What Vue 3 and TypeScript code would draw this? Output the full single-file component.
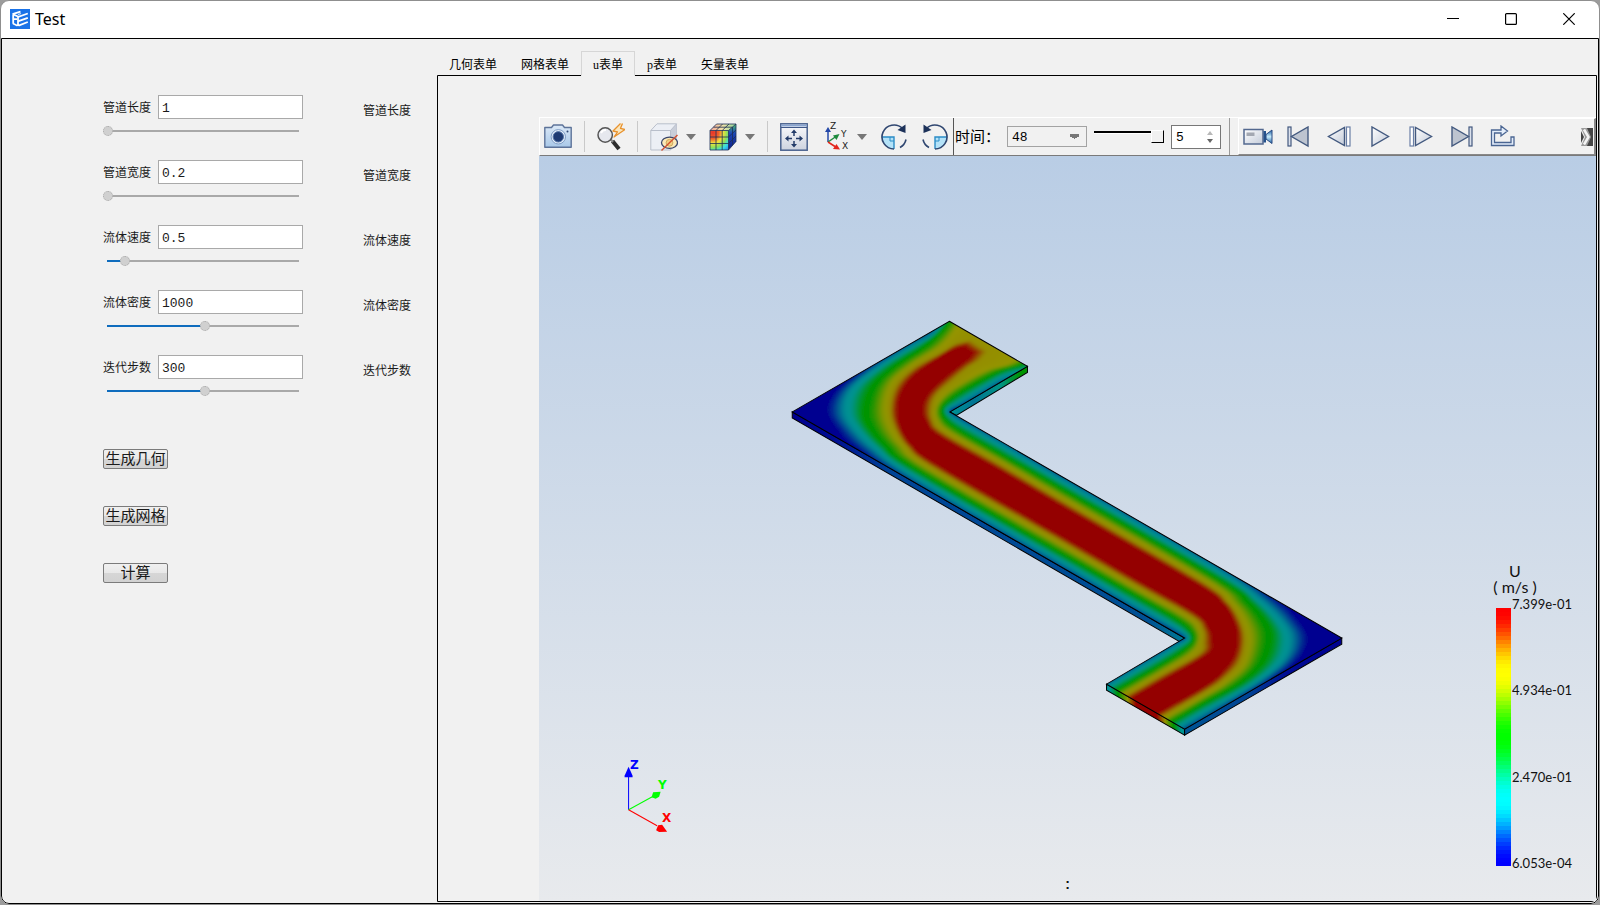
<script setup lang="ts">
import { ref, reactive } from 'vue'

interface Param {
  id: string
  name: string
  value: string
  level: number
}

const params = reactive<Param[]>([
  { id: 'length', name: '管道长度', value: '1', level: 0 },
  { id: 'width', name: '管道宽度', value: '0.2', level: 0 },
  { id: 'speed', name: '流体速度', value: '0.5', level: 9 },
  { id: 'density', name: '流体密度', value: '1000', level: 51 },
  { id: 'steps', name: '迭代步数', value: '300', level: 51 },
])

const actions = ['生成几何', '生成网格', '计算']
const tabs = ['几何表单', '网格表单', 'u表单', 'p表单', '矢量表单']
const activeTab = ref(2)
const timeStep = ref('48')
const stride = ref('5')
const legendLabels = ['7.399e-01', '4.934e-01', '2.470e-01', '6.053e-04']

type Pt = [number, number]
type Rgb = [number, number, number]
interface Level {
  color: Rgb
  outer: Pt[]
  inner: Pt[]
  outerGap: number
  innerGap: number
}

// Iso-lines of the velocity field around the upper bend, from wall to core.
const levels: Level[] = [
  {
    color: [0, 0, 144],
    outer: [[939, 312], [927, 324], [903, 340], [856, 372], [832, 391], [822, 410], [830, 427], [850, 448], [913, 490], [1067, 579]],
    inner: [[1050, 378], [1027, 380], [1003, 390], [984, 401], [966, 409], [956, 411], [962, 413], [977, 421], [1000, 433], [1067, 472]],
    outerGap: -8,
    innerGap: -7,
  },
  {
    color: [0, 146, 146],
    outer: [[947, 316], [933, 336], [913, 347], [880, 367], [853, 390], [847, 411], [855, 428], [877, 450], [913, 476], [1067, 565]],
    inner: [[1045, 362], [1025, 371], [1003, 377], [980, 390], [960, 402], [946, 411], [953, 419], [970, 429], [1000, 446], [1067, 485]],
    outerGap: 6,
    innerGap: 5,
  },
  {
    color: [0, 148, 0],
    outer: [[952, 316], [941, 330], [923, 347], [893, 367], [873, 386], [865, 408], [867, 424], [883, 445], [913, 469], [1067, 558]],
    inner: [[1045, 350], [1027, 363], [1003, 371], [977, 384], [955, 397], [943, 408], [945, 419], [960, 431], [1000, 454], [1067, 492]],
    outerGap: 14,
    innerGap: 13,
  },
  {
    color: [148, 148, 0],
    outer: [[962, 318], [953, 334], [940, 348], [913, 365], [893, 383], [886, 407], [890, 427], [903, 447], [930, 470], [1067, 549]],
    inner: [[1040, 335], [1013, 362], [985, 371], [960, 384], [943, 396], [935, 408], [936, 420], [947, 432], [1000, 462], [1067, 501]],
    outerGap: 22,
    innerGap: 21,
  },
  {
    color: [148, 142, 0],
    outer: [[972, 340], [957, 343], [943, 352], [913, 367], [894, 385], [888, 408], [892, 427], [905, 447], [932, 469], [1067, 547]],
    inner: [[990, 352], [982, 361], [970, 368], [955, 381], [939, 395], [934, 407], [934, 420], [945, 433], [1000, 464], [1067, 503]],
    outerGap: 24,
    innerGap: 23,
  },
  {
    color: [148, 0, 0],
    outer: [[962, 347], [951, 351], [938, 358], [914, 376], [902, 393], [898, 410], [901, 427], [913, 447], [940, 467], [1067, 540]],
    inner: [[971, 353], [966, 360], [958, 367], [939, 382], [926, 396], [921, 409], [925, 422], [938, 436], [1000, 471], [1067, 510]],
    outerGap: 31,
    innerGap: 30,
  },
]

const slope = 0.577
const turn = ([x, y]: Pt): Pt => [2134 - x, 1050 - y]

// The outlet leg is the inlet leg turned by half a revolution, with fully developed flow.
function outletOuter(l: Level): Pt[] {
  const run = [985, 955, 930].map((x): Pt => [x, 412 - (x - 792) * slope + l.outerGap])
  return [...run, ...l.outer.slice(3, 9)].map(turn)
}
function outletInner(l: Level): Pt[] {
  const run = [1050, 1027, 1000, 975].map((x): Pt => [x, 412 - (x - 950) * slope - l.innerGap])
  return [...run, ...l.inner.slice(4, 9)].map(turn)
}
function sides(l: Level): [Pt[], Pt[]] {
  return [
    [...l.outer, ...outletInner(l).reverse()],
    [...l.inner, ...outletOuter(l).reverse()].reverse(),
  ]
}
function spline(p: Pt[]): string {
  let d = ''
  for (let i = 0; i < p.length - 1; i++) {
    const a = p[Math.max(i - 1, 0)]
    const b = p[i]
    const c = p[i + 1]
    const e = p[Math.min(i + 2, p.length - 1)]
    const n = [b[0] + (c[0] - a[0]) / 6, b[1] + (c[1] - a[1]) / 6, c[0] - (e[0] - b[0]) / 6, c[1] - (e[1] - b[1]) / 6, c[0], c[1]]
    d += 'C' + n.map((v) => v.toFixed(1)).join(' ')
  }
  return d
}
const mix = (a: number[], b: number[], t: number) => a.map((v, i) => v + (b[i] - v) * t)

const bands: { d: string; fill: string }[] = []
const STEPS = 10
for (let k = 0; k < levels.length - 1; k++) {
  const [la, ra] = sides(levels[k])
  const [lb, rb] = sides(levels[k + 1])
  for (let s = 1; s <= STEPS; s++) {
    const t = s / STEPS
    const l = la.map((p, i) => mix(p, lb[i], t) as Pt)
    const r = ra.map((p, i) => mix(p, rb[i], t) as Pt)
    const e = t * t * (3 - 2 * t)
    bands.push({
      d: `M${l[0].join(' ')}${spline(l)}L${r[0].join(' ')}${spline(r)}Z`,
      fill: `rgb(${mix(levels[k].color, levels[k + 1].color, e).map(Math.round).join(',')})`,
    })
  }
}

const ramp: Rgb[] = [[255, 0, 0], [255, 255, 0], [0, 255, 0], [0, 255, 255], [0, 0, 255]]
const swatches = Array.from({ length: 64 }, (_, i) => {
  const pos = (i / 63) * 4
  const k = Math.min(Math.floor(pos), 3)
  const t = pos - k
  return `rgb(${mix(ramp[k], ramp[k + 1], t * t * (3 - 2 * t)).map(Math.round).join(',')})`
})
</script>

<template>
  <div class="window">
    <header class="titlebar">
      <svg class="logo" width="20" height="20" viewBox="0 0 20 20" aria-hidden="true">
        <rect width="20" height="20" fill="#1a73e8" />
        <path d="M2.500 5.200L10.500 2.600M3.200 5.500v9.200M3 10.200h4M3 14.500l4.500 2.200M8 8.300v8.700M4 5.800l4.500 2L17.800 4.500M8.500 12.200l9.300-3.400M8.500 16.600l9.300-3.600" fill="none" stroke="#fff" stroke-width="1.800" />
        <path d="M11 4.500L8 5.600" stroke="#bcd8fb" stroke-width="1.200" />
      </svg>
      <h1>Test</h1>
      <div class="winbtns">
        <button type="button" aria-label="最小化">
          <svg width="12" height="12" viewBox="0 0 12 12"><path d="M0 5.500h12" stroke="#000" /></svg>
        </button>
        <button type="button" aria-label="最大化">
          <svg width="12" height="12" viewBox="0 0 12 12"><rect x=".6" y=".6" width="10.800" height="10.800" rx="1" fill="none" stroke="#000" stroke-width="1.200" /></svg>
        </button>
        <button type="button" aria-label="关闭">
          <svg width="12" height="12" viewBox="0 0 12 12"><path d="M.3.3l11.400 11.400M11.700.3L.3 11.700" stroke="#000" stroke-width="1.200" /></svg>
        </button>
      </div>
    </header>

    <div class="body">
      <form class="side" @submit.prevent>
        <div v-for="p in params" :key="p.id" class="param">
          <label :for="p.id">{{ p.name }}</label>
          <input :id="p.id" v-model="p.value" type="text" class="field" />
          <span class="note">{{ p.name }}</span>
          <input v-model.number="p.level" type="range" class="slider" min="0" max="100" :aria-label="p.name" :style="{ '--fill': p.level + '%' }" />
        </div>
        <div class="actions">
          <button v-for="a in actions" :key="a" type="button">{{ a }}</button>
        </div>
      </form>

      <main class="main">
        <nav class="tabs" role="tablist">
          <button v-for="(t, i) in tabs" :key="t" type="button" role="tab" :aria-selected="i === activeTab" :class="{ active: i === activeTab }" @click="activeTab = i">{{ t }}</button>
        </nav>
        <section class="pane">
          <div class="viewer">
            <div class="toolbar">
              <button type="button" class="tool" aria-label="截图">
                <svg width="28" height="28" viewBox="0 0 28 28">
                  <defs><linearGradient id="gCam" x1="0" y1="0" x2="0" y2="1"><stop offset="0" stop-color="#dce9f7" /><stop offset="1" stop-color="#a9c8e8" /></linearGradient></defs>
                  <path d="M.8 4.500h6.700l2-2.500h9l2 2.500h6.700v19.700H.8z" fill="url(#gCam)" stroke="#5d7399" stroke-width="1.400" stroke-linejoin="round" />
                  <circle cx="14.300" cy="13.800" r="7.200" fill="#e4eefa" stroke="#7f9cc4" />
                  <circle cx="14.300" cy="13.800" r="5.200" fill="#1f3b73" stroke="#5676a8" />
                  <circle cx="23.500" cy="8.500" r="1" fill="#2d4674" />
                </svg>
              </button>
              <i class="sep"></i>
              <button type="button" class="tool" aria-label="快速缩放">
                <svg width="28" height="28" viewBox="0 0 28 28">
                  <path d="M15.500 18l6.500 8" stroke="#2d2d2d" stroke-width="4" /><path d="M13 15.500l3 3.500" stroke="#888" stroke-width="2" />
                  <circle cx="8.200" cy="12" r="7.200" fill="#e6e8ee" stroke="#555" stroke-width="1.500" />
                  <path d="M4 10a5 5 0 0 1 5-3" stroke="#fff" stroke-width="2" fill="none" />
                  <path d="M23.500.5L16 8l4.500 1L17 14l11-7.500-4.500-1.200 2-4.800" fill="#fbe6bc" stroke="#e8922e" stroke-width="1.300" stroke-linejoin="round" />
                </svg>
              </button>
              <i class="sep"></i>
              <button type="button" class="tool" aria-label="显示实体">
                <svg width="28" height="28" viewBox="0 0 28 28">
                  <path d="M.8 7.500L7 .8h19.500V19L20.500 27H.8z" fill="#eceff5" stroke="#b9bfcb" />
                  <path d="M20.500 7.500l6-6.700V19l-6 8z" fill="#c9ced9" />
                  <path d="M.8 7.500h19.700V27M20.500 7.500l6-6.700" fill="none" stroke="#b9bfcb" />
                  <ellipse cx="19.500" cy="19.800" rx="8" ry="5.600" fill="#fbe9b8" stroke="#3b466a" stroke-width="1.300" />
                  <circle cx="19.500" cy="19.800" r="3.400" fill="#f3d184" stroke="#c79a4e" stroke-width=".8" />
                  <path d="M11.500 27.500L27.500 12" stroke="#d2502f" stroke-width="1.400" />
                </svg>
              </button>
              <button type="button" class="drop" aria-label="实体选项"><svg width="10" height="6" viewBox="0 0 10 6"><path d="M0 0h10L5 6z" fill="#777" /></svg></button>
              <button type="button" class="tool spaced" aria-label="云图">
                <svg width="28" height="28" viewBox="0 0 28 28">
                  <defs>
                    <radialGradient id="gCube" cx=".15" cy=".1" r="1.300"><stop offset="0" stop-color="#e8352a" /><stop offset=".25" stop-color="#f2602a" /><stop offset=".42" stop-color="#f5e23c" /><stop offset=".6" stop-color="#8be05a" /><stop offset=".75" stop-color="#35e0e8" /><stop offset="1" stop-color="#2a6cf0" /></radialGradient>
                    <linearGradient id="gTop" x1="0" y1="0" x2="1" y2="0"><stop offset="0" stop-color="#f4a294" /><stop offset=".5" stop-color="#efe3a8" /><stop offset="1" stop-color="#8ed99a" /></linearGradient>
                    <linearGradient id="gSide" x1="0" y1="0" x2="0" y2="1"><stop offset="0" stop-color="#48c46a" /><stop offset=".35" stop-color="#1d48b8" /><stop offset="1" stop-color="#0c1d86" /></linearGradient>
                  </defs>
                  <path d="M1 7.500h18.500V27H1z" fill="url(#gCube)" /><path d="M1 7.500L7.500 1H27l-7.500 6.500z" fill="url(#gTop)" /><path d="M19.500 7.500L27 1v17.500L19.500 27z" fill="url(#gSide)" />
                  <path d="M7 7.500V27M13.200 7.500V27M1 14h18.500M1 20.500h18.500M7 7.500L13.500 1M13.200 7.500L20 1M4.500 4.200h19v18M1 7.500L7.500 1H27v17.500L19.500 27H1zH19.500V27M19.500 7.500L27 1M19.500 14L27 7M19.500 20.500L27 13" fill="none" stroke="#1d2f55" stroke-width=".8" />
                </svg>
              </button>
              <button type="button" class="drop" aria-label="云图选项"><svg width="10" height="6" viewBox="0 0 10 6"><path d="M0 0h10L5 6z" fill="#777" /></svg></button>
              <i class="sep"></i>
              <button type="button" class="tool" aria-label="适应窗口">
                <svg width="28" height="28" viewBox="0 0 28 28">
                  <defs><linearGradient id="gFit" x1="0" y1="0" x2="0" y2="1"><stop offset="0" stop-color="#fbfbfd" /><stop offset="1" stop-color="#cdd3df" /></linearGradient></defs>
                  <rect x=".8" y=".8" width="26.400" height="26.400" fill="url(#gFit)" stroke="#4a628e" stroke-width="1.500" />
                  <path d="M1 2.500h26" stroke="#8aa5d0" stroke-width="2" /><path d="M1 4.500h26" stroke="#3e5788" />
                  <path d="M14 8v5M14 18v5M7 15.500h5M16 15.500h5" stroke="#233b69" stroke-width="1.500" />
                  <path d="M14 6.500l-3 3.500h6zM14 24.500l-3-3.500h6zM5 15.500l3.500-3v6zM23 15.500l-3.500-3v6z" fill="#233b69" />
                </svg>
              </button>
              <button type="button" class="tool spaced" aria-label="视角">
                <svg width="28" height="30" viewBox="0 0 28 30">
                  <path d="M7 20V8" stroke="#2448a8" stroke-width="1.500" /><path d="M7 5l-3 5h6z" fill="#2448a8" />
                  <path d="M7 20l8-5.500" stroke="#1c8a3c" stroke-width="1.500" /><path d="M18.500 12l-6.500 1.500 3.500 4.500z" fill="#1c8a3c" />
                  <path d="M7 20l7 4.500" stroke="#e3261c" stroke-width="1.500" /><path d="M19 27.500l-7-.5 3.500-5z" fill="#e3261c" />
                  <g class="axis-name"><text x="9" y="7">Z</text><text x="20" y="15">Y</text><text x="21" y="27">X</text></g>
                </svg>
              </button>
              <button type="button" class="drop" aria-label="视角选项"><svg width="10" height="6" viewBox="0 0 10 6"><path d="M0 0h10L5 6z" fill="#777" /></svg></button>
              <button v-for="dir in ['顺时针', '逆时针']" :key="dir" type="button" class="tool spaced" :aria-label="dir + '旋转'">
                <svg width="28" height="28" viewBox="0 0 28 28">
                  <g :class="{ mirrored: dir === '逆时针' }">
                    <path d="M2 14h12v12A12 12 0 0 1 2 14z" fill="#b4e2f8" /><path d="M2 14h12v12" fill="none" stroke="#2a8cc6" stroke-width="1.400" /><path d="M10 14v4h4" fill="none" stroke="#2a8cc6" />
                    <path d="M14 26A12 12 0 1 1 22.500 5.500M26 16.500a12 12 0 0 1-6 8" fill="none" stroke="#2f4670" stroke-width="1.600" />
                    <path d="M25.500 1.500V10L17.500 7z" fill="#1c3159" />
                  </g>
                </svg>
              </button>

              <div class="time">
                <label for="step">时间：</label>
                <select id="step" v-model="timeStep"><option>48</option></select>
                <input type="range" class="stepper" min="0" max="48" value="48" aria-label="时间步" />
                <div class="spin">
                  <input v-model="stride" type="text" aria-label="步长" />
                  <span>
                    <button type="button" aria-label="增加"><svg width="6" height="4" viewBox="0 0 6 4"><path d="M0 4h6L3 0z" fill="#b8b8b8" /></svg></button>
                    <button type="button" aria-label="减少"><svg width="6" height="4" viewBox="0 0 6 4"><path d="M0 0h6L3 4z" fill="#666" /></svg></button>
                  </span>
                </div>
              </div>

              <div class="playbar">
                <svg width="0" height="0" class="defs" aria-hidden="true"><defs><linearGradient id="gPlay" x1="0" y1="0" x2="1" y2="1"><stop offset="0" stop-color="#fff" /><stop offset="1" stop-color="#c3cbd9" /></linearGradient><linearGradient id="gLens" x1="0" y1="0" x2="0" y2="1"><stop offset="0" stop-color="#1b5fa6" /><stop offset=".5" stop-color="#c8ecfb" /><stop offset="1" stop-color="#1b5fa6" /></linearGradient></defs></svg>
                <button type="button" class="record" aria-label="录制">
                  <svg width="30" height="20" viewBox="0 0 30 20"><rect x="1" y="2.500" width="19" height="14.500" fill="url(#gPlay)" stroke="#53688f" stroke-width="1.500" /><rect x="3.500" y="5.500" width="8" height="3.500" fill="#a3a8b2" /><rect x="20.500" y="4" width="2.500" height="11.500" fill="#24518c" /><path d="M23 7.500L29 3v13.500L23 12z" fill="url(#gLens)" stroke="#2a4a80" /></svg>
                </button>
                <button type="button" aria-label="第一帧">
                  <svg width="22" height="22" viewBox="0 0 22 22"><rect x="1" y="1" width="3" height="19" fill="#dbe1ec" stroke="#43597f" stroke-width="1.200" /><path d="M21 1v19L4.500 10.500z" fill="#bdc4d0" stroke="#43597f" stroke-width="1.400" /></svg>
                </button>
                <button type="button" aria-label="上一帧">
                  <svg width="24" height="22" viewBox="0 0 24 22"><rect x="19.500" y="1" width="3.500" height="19" fill="#fff" stroke="#6a7fa6" stroke-width="1.200" /><path d="M17.500 1.500v18l-16-9z" fill="url(#gPlay)" stroke="#43597f" stroke-width="1.400" /></svg>
                </button>
                <button type="button" aria-label="播放">
                  <svg width="20" height="22" viewBox="0 0 20 22"><path d="M2 1v19l16.500-9.500z" fill="url(#gPlay)" stroke="#43597f" stroke-width="1.400" /></svg>
                </button>
                <button type="button" aria-label="下一帧">
                  <svg width="24" height="22" viewBox="0 0 24 22"><rect x="1" y="1" width="3.500" height="19" fill="#fff" stroke="#6a7fa6" stroke-width="1.200" /><path d="M6.500 1.500v18l16-9z" fill="url(#gPlay)" stroke="#43597f" stroke-width="1.400" /></svg>
                </button>
                <button type="button" aria-label="最后一帧">
                  <svg width="22" height="22" viewBox="0 0 22 22"><rect x="18" y="1" width="3" height="19" fill="#dbe1ec" stroke="#43597f" stroke-width="1.200" /><path d="M1 1v19l16.500-9.500z" fill="#bdc4d0" stroke="#43597f" stroke-width="1.400" /></svg>
                </button>
                <button type="button" aria-label="循环">
                  <svg width="26" height="24" viewBox="0 0 26 24"><path d="M1.500 5v15.500h22.500V12h-3v5.500H4.500V8H11v3l6.500-5L11 1v4z" fill="#e4eefb" stroke="#4a6592" stroke-width="1.300" /></svg>
                </button>
                <button type="button" class="more" aria-label="更多">
                  <svg width="12" height="18" viewBox="0 0 12 18"><path d="M0 0h8l4 9-4 9H0l4-9z" fill="#9a9a9a" /><path d="M6 0h6v18H6l4-9z" fill="#444" /><path d="M0 3l3 6-3 6" fill="#444" /><path d="M3 1.500L7.500 9 3 16.500" fill="none" stroke="#f4f4f4" stroke-width="2.500" /></svg>
                </button>
              </div>
            </div>

            <div class="canvas">
              <svg class="scene" viewBox="539 157 1056 744" role="img" aria-label="U">
                <defs>
                  <clipPath id="plate"><path d="M949 322L1027 367 949.500 412.500 1341 638.500 1184 729.500 1106 684.500 1184 638.500 792 412.500z" /></clipPath>
                  <filter id="soften" x="-5%" y="-5%" width="110%" height="110%"><feGaussianBlur stdDeviation="1.500" /></filter>
                  <linearGradient id="fLong" gradientUnits="userSpaceOnUse" x1="792" y1="0" x2="1184" y2="0"><stop offset="0" stop-color="#000090" /><stop offset=".1" stop-color="#000c92" /><stop offset=".25" stop-color="#004496" /><stop offset=".9" stop-color="#005094" /><stop offset="1" stop-color="#007a94" /></linearGradient>
                  <linearGradient id="fIn" gradientUnits="userSpaceOnUse" x1="950" y1="0" x2="1028" y2="0"><stop offset="0" stop-color="#009494" /><stop offset=".3" stop-color="#007494" /><stop offset=".65" stop-color="#009484" /><stop offset=".9" stop-color="#009400" /></linearGradient>
                  <linearGradient id="fOut" gradientUnits="userSpaceOnUse" x1="1106" y1="0" x2="1184" y2="0"><stop offset=".04" stop-color="#009494" /><stop offset=".15" stop-color="#009400" /><stop offset=".27" stop-color="#949400" /><stop offset=".38" stop-color="#940000" /><stop offset=".64" stop-color="#940000" /><stop offset=".75" stop-color="#949400" /><stop offset=".86" stop-color="#009400" /><stop offset=".96" stop-color="#009494" /></linearGradient>
                  <linearGradient id="fEnd" gradientUnits="userSpaceOnUse" x1="1184" y1="0" x2="1341" y2="0"><stop offset="0" stop-color="#005494" /><stop offset=".4" stop-color="#004494" /><stop offset=".65" stop-color="#000c94" /><stop offset="1" stop-color="#000090" /></linearGradient>
                </defs>
                <g class="face">
                  <path d="M792 412.500v6L1179 642 1184 638.500z" fill="url(#fLong)" />
                  <path d="M1027 367v6L956 416 949.500 412.500z" fill="url(#fIn)" />
                  <path d="M1106 684.500v6L1184 735.500v-6z" fill="url(#fOut)" />
                  <path d="M1184 729.500v6L1341 644.500v-6z" fill="url(#fEnd)" />
                </g>
                <g clip-path="url(#plate)">
                  <g filter="url(#soften)">
                    <rect x="770" y="300" width="590" height="450" fill="#000090" />
                    <path v-for="(b, i) in bands" :key="i" :d="b.d" :fill="b.fill" />
                  </g>
                </g>
                <path class="edge" d="M949 322L1027 367 949.500 412.500 1341 638.500 1184 729.500 1106 684.500 1184 638.500 792 412.500z" />
                <g class="triad">
                  <path d="M628.500 810V775" stroke="#00f" /><path d="M628.500 767l-4 9v1.500h8V776z" fill="#00f" />
                  <path d="M628.500 810L654 796" stroke="#0f0" /><path d="M660.500 792l-7.500.500-1.500 5 4 1.500 3.500-2z" fill="#0f0" />
                  <path d="M628.500 810L657 826" stroke="#f00" /><path d="M667 832l-5-7-4 .5-2 5 3 1.800z" fill="#f00" />
                  <text x="630" y="769" fill="#00f">Z</text><text x="658" y="789" fill="#0f0">Y</text><text x="662" y="822" fill="#f00">X</text>
                </g>
              </svg>
              <div class="legend">
                <div class="legend-title">U<br />( m/s )</div>
                <div class="legend-scale">
                  <div class="bar"><i v-for="(c, i) in swatches" :key="i" :style="{ background: c }"></i></div>
                  <div class="marks"><span v-for="l in legendLabels" :key="l">{{ l }}</span></div>
                </div>
              </div>
              <span class="caption">:</span>
            </div>
          </div>
        </section>
      </main>
    </div>
  </div>
</template>

<style>
html,
body,
#app {
  height: 100%;
}
body {
  background: #9c9c9c;
}
</style>

<style scoped>
* {
  box-sizing: border-box;
}
button {
  font: inherit;
  color: inherit;
  border: 0;
  padding: 0;
  background: none;
}
svg {
  display: block;
  flex: none;
}
.window {
  height: 100%;
  display: flex;
  flex-direction: column;
  border: 1px solid #8f8f8f;
  border-radius: 9px;
  overflow: hidden;
  background: #fff;
  color: #1a1a1a;
  font-family: 'Noto Sans CJK SC', sans-serif;
  font-size: 12px;
}
.titlebar {
  flex: 0 0 37px;
  display: flex;
  align-items: center;
  padding: 0 1px 2px 9px;
}
.titlebar h1 {
  margin: 0 0 0 5px;
  font: 400 16px/20px 'Noto Sans', sans-serif;
  color: #000;
}
.winbtns {
  margin-left: auto;
  display: flex;
  align-self: stretch;
}
.winbtns button {
  width: 58px;
  display: flex;
  align-items: center;
  justify-content: center;
}
.body {
  flex: 1;
  min-height: 0;
  display: flex;
  border: 1px solid #000;
  border-radius: 0 0 8px 8px;
  background: #f1f1f1;
}
.side {
  flex: 0 0 435px;
  padding: 56px 0 0 101px;
}
.param {
  display: grid;
  grid-template-columns: 55px 145px 60px;
  grid-template-rows: 24px 41px;
  align-items: center;
}
.param label {
  padding-bottom: 2px;
}
.note {
  padding: 4px 0 0 60px;
  white-space: nowrap;
}
.field {
  width: 145px;
  height: 24px;
  border: 1px solid #a9a9a9;
  background: #fff;
  padding: 2px 3px 0;
  font: 13px 'Liberation Mono', monospace;
  color: #1a1a1a;
  outline: 0;
}
.slider {
  grid-column: 1 / 3;
  align-self: start;
  appearance: none;
  width: 200px;
  height: 12px;
  margin: 6px 0 0;
  background:
    linear-gradient(#0f6cbd, #0f6cbd) 4px 5px / var(--fill) 2px no-repeat,
    linear-gradient(#a9a9a9, #a9a9a9) 4px 5px / 192px 2px no-repeat;
}
.slider::-webkit-slider-thumb {
  appearance: none;
  width: 10px;
  height: 10px;
  border-radius: 50%;
  border: 1px dotted #a8a8a8;
  background: #d0d0d0;
}
.actions {
  display: flex;
  flex-direction: column;
  gap: 37px;
  align-items: flex-start;
  padding-top: 29px;
}
.actions button {
  width: 65px;
  height: 20px;
  border: 1px solid #7b7b7b;
  border-radius: 2px;
  padding-bottom: 2px;
  background: linear-gradient(#f0f0f0, #e8e8e8 50%, #d6d6d6 50%, #d2d2d2);
  font-size: 15px;
  line-height: 16px;
  white-space: nowrap;
}
.main {
  flex: 1;
  min-width: 0;
  display: flex;
  flex-direction: column;
  padding: 12px 1px 1px 0;
}
.tabs {
  display: flex;
  height: 24px;
  font-family: 'Liberation Serif', 'Noto Sans CJK SC', serif;
  color: #000;
}
.tabs button {
  padding: 2px 12px 0 11px;
  border: 1px solid transparent;
  border-width: 1px 0 1px 1px;
  height: 25px;
  line-height: 20px;
}
.tabs .active {
  padding-right: 11px;
  border: 1px solid #d6d6d6;
  border-bottom-color: #f1f1f1;
  background: #f1f1f1;
  position: relative;
}
.pane {
  flex: 1;
  min-height: 0;
  border: 1px solid #000;
  border-radius: 0 0 6px 0;
  padding: 41px 0 0 101px;
}
.viewer {
  height: 100%;
  display: flex;
  flex-direction: column;
}
.toolbar {
  flex: 0 0 39px;
  display: flex;
  align-items: stretch;
  border: solid #fff;
  border-width: 1px 0 0 1px;
  border-bottom: 1px solid #7a7a7a;
}
.tool,
.drop {
  display: flex;
  align-items: center;
  justify-content: center;
  width: 36px;
  flex: none;
}
.drop {
  width: 18px;
}
.spaced {
  margin-left: 5px;
}
.sep {
  flex: 0 0 17px;
  margin: 3px 0;
  background: linear-gradient(#c9c9c9, #c9c9c9) center / 1px 100% no-repeat;
}
.mirrored {
  transform: matrix(-1, 0, 0, 1, 28, 0);
}
.axis-name {
  font: 9px 'DejaVu Sans', sans-serif;
  fill: #222;
}
.time {
  flex: none;
  display: flex;
  align-items: center;
  gap: 7px;
  border-left: 1px solid #555;
  border-right: 1px solid #999;
  padding: 0 8px 0 1px;
}
.time label {
  width: 45px;
  padding-bottom: 2px;
  font-size: 15px;
  line-height: 20px;
  white-space: nowrap;
  color: #000;
}
.time select {
  appearance: none;
  width: 80px;
  height: 21px;
  border: 1px solid #a3a3a3;
  border-radius: 0;
  padding: 2px 4px 0;
  font: 13px/18px 'Liberation Mono', monospace;
  color: #000;
  background: #f1f1f1 conic-gradient(from -40deg at 50% 100%, #f1f1f1 0) no-repeat;
  background: #f1f1f1 linear-gradient(#777, #777) right 7px center / 0 0 no-repeat;
  background: #f1f1f1 conic-gradient(from -60deg at 50% 100%, #777 120deg, #f1f1f1 0) right 7px center / 9px 5px no-repeat;
}
.stepper {
  appearance: none;
  width: 70px;
  height: 14px;
  margin: 0;
  background: linear-gradient(#000 2px, #fff 2px) 0 1px / 58px 3px no-repeat;
}
.stepper::-webkit-slider-thumb {
  appearance: none;
  width: 13px;
  height: 13px;
  background: #f1f1f1;
  border: 1px solid #fff;
  border-right-color: #000;
  border-bottom-color: #000;
}
.spin {
  width: 50px;
  height: 24px;
  display: flex;
  border: 1px solid #777;
  background: #fff;
}
.spin input {
  width: 35px;
  border: 0;
  padding: 2px 4px 0;
  background: none;
  font: 13px 'Liberation Mono', monospace;
  outline: 0;
}
.spin span {
  display: flex;
  flex-direction: column;
  justify-content: center;
  gap: 4px;
}
.playbar {
  flex: 1;
  min-width: 0;
  margin-left: 8px;
  display: flex;
  border: 1px solid #fff;
  border-right: 2px solid #888;
  border-bottom: 1px solid #888;
}
.playbar .defs {
  position: absolute;
}
.playbar button {
  flex: 0 1 41px;
  display: flex;
  align-items: center;
  justify-content: center;
}
.playbar .record {
  flex-basis: 38px;
}
.playbar .more {
  margin-left: auto;
  flex-basis: 14px;
}
.canvas {
  flex: 1;
  min-height: 0;
  position: relative;
  background: linear-gradient(#b9cde5, #e8eaed);
  color: #111;
}
.scene {
  width: 100%;
  height: 100%;
}
.face path,
.edge {
  stroke: #000;
  stroke-width: 1;
}
.edge {
  fill: none;
}
.triad {
  font: bold 12px 'DejaVu Sans', sans-serif;
}
.legend {
  position: absolute;
  right: 24px;
  bottom: 35px;
  width: 76px;
  font-family: Lato, sans-serif;
}
.legend-title {
  width: 48px;
  margin: 0 0 13px -5px;
  font-size: 16px;
  line-height: 16px;
  text-align: center;
  white-space: nowrap;
}
.legend-scale {
  display: flex;
}
.bar {
  width: 15px;
  height: 258px;
  display: grid;
  grid-template-rows: repeat(64, 1fr);
}
.marks {
  display: flex;
  flex-direction: column;
  justify-content: space-between;
  margin: -10px 0 -3px 1px;
  font-size: 13px;
  line-height: 12px;
}
.caption {
  position: absolute;
  left: 50%;
  bottom: 8px;
  font: bold 14px/18px 'Liberation Sans', sans-serif;
  transform: translateX(-50%);
}
</style>
